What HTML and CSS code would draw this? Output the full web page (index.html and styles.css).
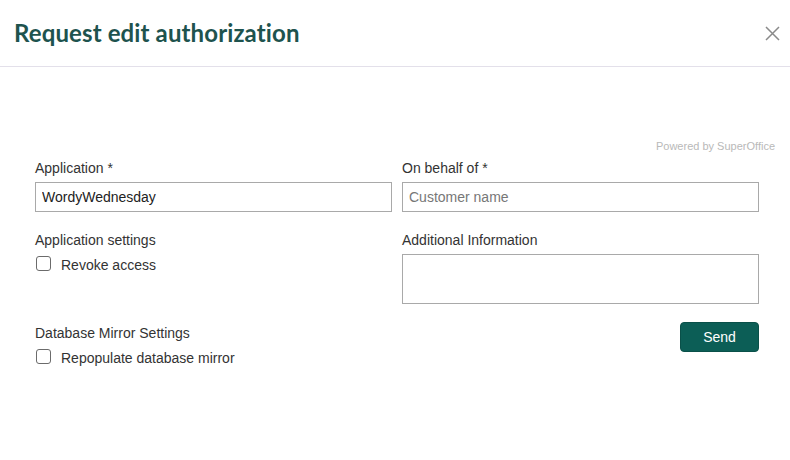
FILE: index.html
```html
<!DOCTYPE html>
<html>
<head>
<meta charset="utf-8">
<link rel="stylesheet" href="styles.css">
</head>
<body>
<div class="dialog">
  <header class="header">
    <h1 class="title">Request edit authorization</h1>
    <button class="close" aria-label="Close">
      <svg width="15" height="15" viewBox="0 0 15 15"><path d="M1 1 L14 14 M14 1 L1 14" stroke="#8a8a8a" stroke-width="1.5" fill="none"/></svg>
    </button>
  </header>
  <div class="body">
    <div class="powered">Powered by SuperOffice</div>
    <div class="form">
      <div class="col">
        <label class="label">Application *</label>
        <input class="input" type="text" value="WordyWednesday">
        <div class="label section">Application settings</div>
        <label class="check"><span class="box"></span>Revoke access</label>
        <div class="label section2">Database Mirror Settings</div>
        <label class="check"><span class="box"></span>Repopulate database mirror</label>
      </div>
      <div class="col">
        <label class="label">On behalf of *</label>
        <input class="input" type="text" placeholder="Customer name">
        <div class="label section">Additional Information</div>
        <textarea class="textarea"></textarea>
        <div class="actions"><button class="send">Send</button></div>
      </div>
    </div>
  </div>
</div>
</body>
</html>
```
FILE: styles.css
```css
* { box-sizing: border-box; }
body {
  margin: 0;
  background: #fff;
  font-family: "Liberation Sans", Arial, sans-serif;
  font-size: 14px;
  color: #333;
}
.header {
  height: 67px;
  border-bottom: 1px solid #e3e0ea;
  display: flex;
  align-items: center;
  justify-content: space-between;
  padding: 0 10px 0 14px;
}
.title {
  margin: 0;
  font-family: Lato, "Noto Sans", sans-serif;
  font-weight: 700;
  font-size: 24px;
  letter-spacing: 0.12px;
  color: #1e534e;
  padding-bottom: 2px;
}
.close {
  border: 0;
  background: none;
  padding: 0;
  width: 15px;
  height: 15px;
  display: flex;
  align-items: center;
  justify-content: center;
}
.body {
  padding: 73px 15px 0 35px;
}
.powered {
  text-align: right;
  font-size: 11px;
  color: #b9b9b9;
  line-height: 13px;
}
.form {
  display: grid;
  grid-template-columns: 357px 357px;
  column-gap: 10px;
  margin-top: 7px;
}
.col {
  display: flex;
  flex-direction: column;
  align-items: stretch;
}
.label {
  line-height: 16px;
  margin-bottom: 6px;
  display: block;
}
.section { margin-top: 20px; }
.section2 { margin-top: 52px; }
.input {
  height: 30px;
  border: 1px solid #a9a9a9;
  padding: 0 6px;
  font-family: "Liberation Sans", Arial, sans-serif;
  font-size: 14px;
  color: #222;
  outline: none;
}
.input::placeholder { color: #777; }
.textarea {
  height: 50px;
  border: 1px solid #a9a9a9;
  resize: none;
  font-family: "Liberation Sans", Arial, sans-serif;
  font-size: 14px;
}
.check {
  display: flex;
  align-items: center;
  gap: 10px;
  line-height: 16px;
  margin-left: 1px;
  margin-top: 3px;
}
.box {
  width: 15px;
  height: 15px;
  border: 1px solid #6b6b6b;
  border-radius: 3px;
  background: #fff;
  margin-top: -3px;
}
.actions {
  display: flex;
  justify-content: flex-end;
  margin-top: 18px;
}
.send {
  width: 79px;
  height: 30px;
  background: #0c5e56;
  border: 1px solid #0a5049;
  border-radius: 4px;
  color: #fff;
  font-family: "Liberation Sans", Arial, sans-serif;
  font-size: 14px;
}
```
